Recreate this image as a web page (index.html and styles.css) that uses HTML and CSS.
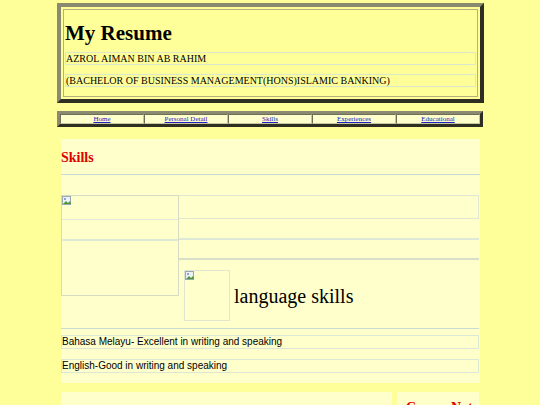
FILE: index.html
```html
<!DOCTYPE html>
<html lang="en">
<head>
    <meta charset="UTF-8">
    <meta name="viewport" content="width=device-width, initial-scale=1.0">
    <title>My Resume</title>
    <link rel="stylesheet" href="styles.css">
</head>
<body>
  <div class="page">
    <div class="header">
      <div class="header-inner">
        <h1 class="title">My Resume</h1>
        <div class="line">AZROL AIMAN BIN AB RAHIM</div>
        <div class="line">(BACHELOR OF BUSINESS MANAGEMENT(HONS)ISLAMIC BANKING)</div>
      </div>
    </div>

    <div class="nav">
      <div class="nav-cell"><a href="#">Home</a></div>
      <div class="nav-cell"><a href="#">Personal Detail</a></div>
      <div class="nav-cell"><a href="#">Skills</a></div>
      <div class="nav-cell"><a href="#">Experiences</a></div>
      <div class="nav-cell"><a href="#">Educational</a></div>
    </div>

    <div class="panel">
      <h2 class="panel-title">Skills</h2>
      <div class="spacer"></div>
      <div class="media">
        <div class="pic-col">
          <div class="pic-top">
            <svg class="broken" width="10" height="10" viewBox="0 0 10 10"><rect x="0.5" y="0.5" width="8" height="8" fill="#eef2f6" stroke="#9aa6b2"/><path d="M1 8 L4 5 L6 7 L8 5 L9 8 Z" fill="#4a9a3a"/><circle cx="3" cy="3" r="1" fill="#6a8ac8"/></svg>
          </div>
          <div class="pic-mid"></div>
          <div class="pic-rest"></div>
        </div>
        <div class="info-col">
          <div class="r1"></div>
          <div class="r2"></div>
          <div class="r3"></div>
          <div class="lang">
            <div class="thumb">
              <svg class="broken" width="10" height="10" viewBox="0 0 10 10"><rect x="0.5" y="0.5" width="8" height="8" fill="#eef2f6" stroke="#9aa6b2"/><path d="M1 8 L4 5 L6 7 L8 5 L9 8 Z" fill="#4a9a3a"/><circle cx="3" cy="3" r="1" fill="#6a8ac8"/></svg>
            </div>
            <span class="lang-text">language skills</span>
          </div>
        </div>
      </div>
      <div class="skill first">Bahasa Melayu- Excellent in writing and speaking</div>
      <div class="skill">English-Good in writing and speaking</div>
    </div>

    <div class="bottom">
      <div class="panel-wide"></div>
      <div class="panel-side">
        <h2 class="panel-title">Career Notes</h2>
      </div>
    </div>
  </div>
</body>
</html>
```

FILE: styles.css
```css
body {
  margin: 0;
  background-color: #ffff99;
  font-family: "Liberation Serif", serif;
  color: #000;
}

.page {
  width: 427px;
  margin-left: 57px;
  padding-top: 3px;
}

.header {
  border: 4px solid;
  border-color: #8a8a70 #2e2e22 #2e2e22 #8a8a70;
  padding: 2px;
}

.header-inner {
  border: 1px solid #b8b07a;
  height: 86px;
  padding: 0 1px;
}

.title {
  font-size: 21px;
  line-height: 26px;
  margin: 10px 0 6px;
}

.line {
  border: 1px solid #dce8cc;
  font-size: 10px;
  line-height: 11px;
  height: 11px;
  margin-bottom: 9px;
}

.nav {
  display: grid;
  grid-template-columns: repeat(5, 1fr);
  margin-top: 8px;
  width: 420px;
  border: 3px solid;
  border-color: #8a8a70 #2e2e22 #2e2e22 #8a8a70;
}

.nav-cell {
  background-color: #ffffcc;
  border: 1px solid;
  border-color: #6e6e58 #c8c8a0 #c8c8a0 #6e6e58;
  height: 8px;
  text-align: center;
  font-size: 7px;
  line-height: 8px;
}

.nav-cell a {
  color: #2020c0;
}

.panel {
  margin: 12px 0 0 4px;
  width: 419px;
  background-color: #ffffcc;
  overflow: hidden;
}

.panel-title {
  margin: 0;
  color: #e00000;
  font-size: 14px;
  line-height: 20px;
  padding-top: 9px;
  height: 26px;
  border-bottom: 1px solid #c8dcd4;
}

.spacer {
  height: 20px;
}

.media {
  display: flex;
  width: 418px;
  border-bottom: 1px solid #c8dcd4;
}

.pic-col {
  width: 116px;
  height: 99px;
  border: 1px solid #d6dcc4;
}

.pic-top {
  height: 23px;
  border-bottom: 1px solid #e2ecd8;
}

.pic-mid {
  height: 19px;
  border-bottom: 2px solid #dde8d6;
}

.broken {
  display: block;
}

.info-col {
  flex: 1;
}

.r1 {
  height: 22px;
  border: 1px solid #e0e8d4;
  border-left: none;
}

.r2 {
  height: 19px;
  border-bottom: 2px solid #dde8d6;
}

.r3 {
  height: 18px;
  border-bottom: 2px solid #d8dec8;
}

.lang {
  display: flex;
  align-items: flex-end;
  padding: 10px 0 7px 5px;
}

.thumb {
  width: 44px;
  height: 49px;
  border: 1px solid #e0e6d2;
}

.lang-text {
  font-size: 20px;
  line-height: 24px;
  margin: 0 0 13px 4px;
}

.skill {
  width: 416px;
  border: 1px solid #dce8d4;
  font-family: "Liberation Sans", sans-serif;
  font-size: 10px;
  line-height: 12px;
  height: 12px;
  margin: 0 0 10px;
}

.skill.first {
  margin-top: 6px;
}

.bottom {
  display: flex;
  gap: 5px;
  margin: 9px 0 0 4px;
  width: 418px;
}

.panel-wide {
  width: 331px;
  height: 40px;
  background-color: #ffffcc;
}

.panel-side {
  flex: 1;
  height: 40px;
  background-color: #ffffcc;
  padding-left: 9px;
  overflow: hidden;
}

.panel-side .panel-title {
  padding-top: 6px;
  border-bottom: none;
  white-space: nowrap;
}
```
